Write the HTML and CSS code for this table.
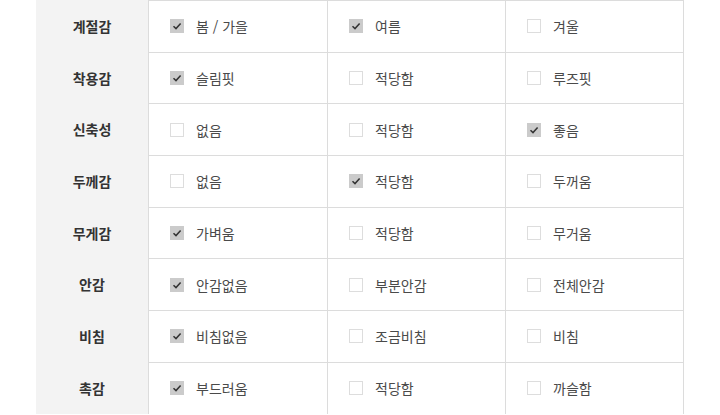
FILE: index.html
```html
<!DOCTYPE html>
<html lang="ko">
<head>
<meta charset="utf-8">
<link rel="stylesheet" href="styles.css">
</head>
<body>
<div class="wrap">
  <div class="table">
    <div class="row">
      <div class="head">계절감</div>
      <div class="cell"><span class="box on"><svg viewBox="0 0 14 14"><path d="M3.5 7.2 L6 9.6 L10.6 4.6"/></svg></span>봄 / 가을</div>
      <div class="cell"><span class="box on"><svg viewBox="0 0 14 14"><path d="M3.5 7.2 L6 9.6 L10.6 4.6"/></svg></span>여름</div>
      <div class="cell"><span class="box"></span>겨울</div>
    </div>
    <div class="row">
      <div class="head">착용감</div>
      <div class="cell"><span class="box on"><svg viewBox="0 0 14 14"><path d="M3.5 7.2 L6 9.6 L10.6 4.6"/></svg></span>슬림핏</div>
      <div class="cell"><span class="box"></span>적당함</div>
      <div class="cell"><span class="box"></span>루즈핏</div>
    </div>
    <div class="row">
      <div class="head">신축성</div>
      <div class="cell"><span class="box"></span>없음</div>
      <div class="cell"><span class="box"></span>적당함</div>
      <div class="cell"><span class="box on"><svg viewBox="0 0 14 14"><path d="M3.5 7.2 L6 9.6 L10.6 4.6"/></svg></span>좋음</div>
    </div>
    <div class="row">
      <div class="head">두께감</div>
      <div class="cell"><span class="box"></span>없음</div>
      <div class="cell"><span class="box on"><svg viewBox="0 0 14 14"><path d="M3.5 7.2 L6 9.6 L10.6 4.6"/></svg></span>적당함</div>
      <div class="cell"><span class="box"></span>두꺼움</div>
    </div>
    <div class="row">
      <div class="head">무게감</div>
      <div class="cell"><span class="box on"><svg viewBox="0 0 14 14"><path d="M3.5 7.2 L6 9.6 L10.6 4.6"/></svg></span>가벼움</div>
      <div class="cell"><span class="box"></span>적당함</div>
      <div class="cell"><span class="box"></span>무거움</div>
    </div>
    <div class="row">
      <div class="head">안감</div>
      <div class="cell"><span class="box on"><svg viewBox="0 0 14 14"><path d="M3.5 7.2 L6 9.6 L10.6 4.6"/></svg></span>안감없음</div>
      <div class="cell"><span class="box"></span>부분안감</div>
      <div class="cell"><span class="box"></span>전체안감</div>
    </div>
    <div class="row">
      <div class="head">비침</div>
      <div class="cell"><span class="box on"><svg viewBox="0 0 14 14"><path d="M3.5 7.2 L6 9.6 L10.6 4.6"/></svg></span>비침없음</div>
      <div class="cell"><span class="box"></span>조금비침</div>
      <div class="cell"><span class="box"></span>비침</div>
    </div>
    <div class="row">
      <div class="head">촉감</div>
      <div class="cell"><span class="box on"><svg viewBox="0 0 14 14"><path d="M3.5 7.2 L6 9.6 L10.6 4.6"/></svg></span>부드러움</div>
      <div class="cell"><span class="box"></span>적당함</div>
      <div class="cell"><span class="box"></span>까슬함</div>
    </div>
  </div>
</div>
</body>
</html>
```
FILE: styles.css
```css
html, body {
  margin: 0;
  padding: 0;
  background: #fff;
}
body {
  font-family: "Noto Sans CJK KR", "Noto Sans", sans-serif;
  overflow: hidden;
}
.wrap {
  padding-left: 36px;
}
.table {
  width: 648px;
  display: flex;
  flex-direction: column;
}
.row {
  display: grid;
  grid-template-columns: 112px 179px 178px 179px;
  height: 51.7px;
}
.head {
  background: #f3f3f3;
  display: flex;
  align-items: center;
  justify-content: center;
  font-size: 14px;
  font-weight: 700;
  color: #333;
}
.cell {
  display: flex;
  align-items: center;
  padding-left: 21px;
  border-left: 1px solid #dcdcdc;
  border-top: 1px solid #dcdcdc;
  font-size: 14px;
  color: #4a4a4a;
}
.cell:last-child {
  border-right: 1px solid #dcdcdc;
}
.box {
  width: 14px;
  height: 14px;
  box-sizing: border-box;
  border: 1px solid #dddddd;
  background: #fff;
  margin-right: 12px;
  flex: none;
  display: flex;
}
.box.on {
  background: #cbcbcb;
  border-color: #cbcbcb;
}
.box svg {
  width: 14px;
  height: 14px;
  margin: -1px;
  fill: none;
  stroke: #333;
  stroke-width: 1.5;
}
```
